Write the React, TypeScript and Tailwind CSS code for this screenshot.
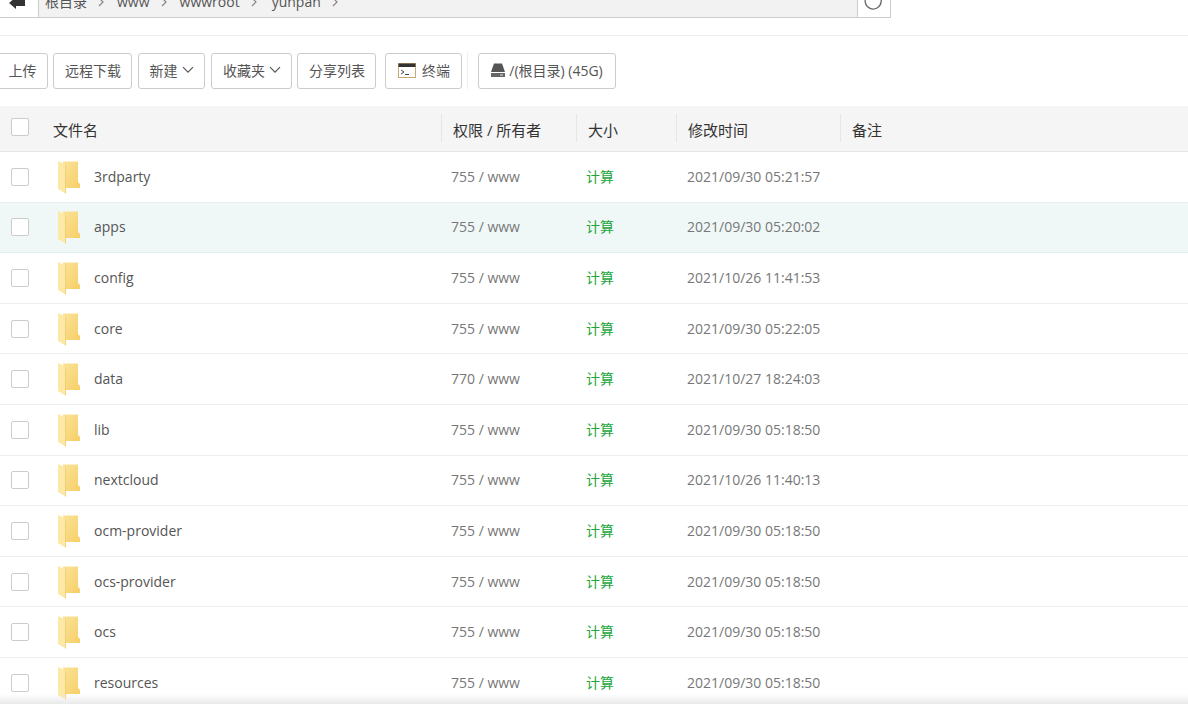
import React from "react";

const rows = [
  ["3rdparty", "755 / www", "2021/09/30 05:21:57"],
  ["apps", "755 / www", "2021/09/30 05:20:02"],
  ["config", "755 / www", "2021/10/26 11:41:53"],
  ["core", "755 / www", "2021/09/30 05:22:05"],
  ["data", "770 / www", "2021/10/27 18:24:03"],
  ["lib", "755 / www", "2021/09/30 05:18:50"],
  ["nextcloud", "755 / www", "2021/10/26 11:40:13"],
  ["ocm-provider", "755 / www", "2021/09/30 05:18:50"],
  ["ocs-provider", "755 / www", "2021/09/30 05:18:50"],
  ["ocs", "755 / www", "2021/09/30 05:18:50"],
  ["resources", "755 / www", "2021/09/30 05:18:50"],
];

const font = { fontFamily: '"Open Sans","Noto Sans CJK SC",sans-serif' };

function Folder() {
  return (
    <svg width="24" height="34" viewBox="0 0 24 34" className="shrink-0">
      <defs>
        <linearGradient id="fb" x1="0" y1="0" x2="1" y2="1">
          <stop offset="0" stopColor="#fbe39a" />
          <stop offset="1" stopColor="#f6cf66" />
        </linearGradient>
      </defs>
      <path d="M6 1.500H21V22L23 24V28H6Z" fill="url(#fb)" />
      <path d="M1 1L8.500 4.500V33.500L1 29Z" fill="#fde9a6" />
      <path d="M8.500 4.500V33.500" stroke="#edca72" strokeWidth="0.8" />
    </svg>
  );
}

function Chevron() {
  return (
    <svg width="12" height="8" viewBox="0 0 12 8" className="ml-1" fill="none" stroke="#555" strokeWidth="1.2">
      <path d="M1 1.200L6 6.200L11 1.200" />
    </svg>
  );
}

function Btn({ children, className = "" }: { children: React.ReactNode; className?: string }) {
  return (
    <div className={"h-9 flex items-center justify-center border border-[#ccc] rounded-[3px] text-[14px] text-[#555] bg-white shrink-0 pb-[2px] " + className}>
      {children}
    </div>
  );
}

function Check() {
  return <div className="w-[18px] h-[18px] border border-[#ccc] rounded-[2px] bg-white shrink-0" />;
}

function Crumb({ children, after }: { children: React.ReactNode; after: string }) {
  return (
    <div className={"flex items-center " + after}>
      <span>{children}</span>
      <svg width="8" height="10" viewBox="0 0 8 10" fill="none" stroke="#888" strokeWidth="1.2" className="ml-[10px]">
        <path d="M2 1L6 5L2 9" />
      </svg>
    </div>
  );
}

export default function App() {
  return (
    <div className="relative w-[1188px] h-[704px] overflow-hidden bg-white" style={font}>
      {/* path bar */}
      <div className="flex h-[18px] w-[891px] items-end">
        <div className="w-[39px] h-[18px] relative overflow-hidden border-r border-[#ccc] border-b shrink-0">
          <svg width="18" height="14" viewBox="0 0 18 14" className="absolute left-[8px] -top-[3px]" fill="#333">
            <path d="M1 6L8 0V3H17V9H8V12Z" />
          </svg>
        </div>
        <div className="flex-1 h-[18px] bg-[#f2f2f2] border-b border-[#ccc] overflow-hidden flex items-center pl-[6px] text-[14px] leading-none text-[#555]">
          <div className="flex -mt-[14px]">
            <Crumb after="mr-[12px]">根目录</Crumb>
            <Crumb after="mr-[12px]">www</Crumb>
            <Crumb after="mr-[14px]">wwwroot</Crumb>
            <Crumb after="">yunpan</Crumb>
          </div>
        </div>
        <div className="w-[34px] h-[18px] border-x border-b border-[#ccc] relative overflow-hidden shrink-0">
          <svg width="18" height="18" viewBox="0 0 18 18" className="absolute left-[6px] -top-[8px]" fill="none" stroke="#666" strokeWidth="1.3">
            <path d="M9 1A8 8 0 1 0 15 3.500" />
          </svg>
        </div>
      </div>

      {/* divider */}
      <div className="mt-[17px] h-px bg-[#eee]" />

      {/* toolbar */}
      <div className="mt-[17px] flex h-9 items-center -ml-1">
        <Btn className="w-[52px] pl-px">上传</Btn>
        <Btn className="w-[79px] ml-[5px] pl-px">远程下载</Btn>
        <Btn className="w-[67px] ml-[6px]">新建<Chevron /></Btn>
        <Btn className="w-[81px] ml-[6px] pl-px">收藏夹<Chevron /></Btn>
        <Btn className="w-[79px] ml-[5px] pl-px">分享列表</Btn>
        <Btn className="w-[77px] ml-[9px] pl-px">
          <svg width="18" height="15" viewBox="0 0 18 15" className="mr-[6px]">
            <rect x="0.500" y="0.500" width="17" height="14" fill="#fff" stroke="#caa873" />
            <rect x="0.500" y="0.500" width="17" height="3.500" fill="#333" />
            <path d="M3 7L6 9L3 11" fill="none" stroke="#444" />
            <path d="M7 11.500H11" stroke="#444" />
          </svg>
          终端
        </Btn>
        <div className="w-px h-9 bg-[#eee] ml-[5px]" />
        <Btn className="w-[138px] ml-[10px]">
          <svg width="14" height="14" viewBox="0 0 14 14" className="mr-[4px]">
            <path d="M3 0.500H11L14 9H0Z" fill="#555" />
            <rect x="0" y="10" width="14" height="4" fill="#666" />
            <rect x="9" y="11.500" width="3" height="1" fill="#ddd" />
          </svg>
          /(根目录) (45G)
        </Btn>
      </div>

      {/* header */}
      <div className="mt-[17px] h-[46px] bg-[#f5f5f5] border-b border-[#e6e6e6] flex items-center text-[15px] text-[#333]">
        <div className="w-[53px] pl-[11px] -mt-[3px]"><Check /></div>
        <div className="w-[388px] pt-[3px]">文件名</div>
        <HeadCell w="w-[135px]">权限 / 所有者</HeadCell>
        <HeadCell w="w-[100px]">大小</HeadCell>
        <HeadCell w="w-[164px]">修改时间</HeadCell>
        <HeadCell w="flex-1">备注</HeadCell>
      </div>

      {/* rows */}
      {rows.map((r, i) => (
        <div
          key={r[0]}
          className={"h-[50.6px] flex items-center border-b text-[14px] text-[#666] " + (i === 1 ? "bg-[#f0f8f7] border-[#dcefeb]" : "border-[#eee]")}
        >
          <div className="w-[57px] pl-[11px]"><Check /></div>
          <div className="w-[37px]"><Folder /></div>
          <div className="w-[357px] text-[#555] pb-[0.8px]">{r[0]}</div>
          <div className="w-[135px] text-[#777] pb-[0.8px]">{r[1]}</div>
          <div className="w-[101px] text-[#20a53a] pb-[0.8px]">计算</div>
          <div className="text-[#777] pb-[0.8px]">{r[2]}</div>
        </div>
      ))}

      {/* bottom shadow */}
      <div className="absolute left-0 right-0 bottom-0 h-[10px] bg-gradient-to-b from-transparent to-[#e9e9e9]" />
    </div>
  );
}

function HeadCell({ w, children }: { w: string; children: React.ReactNode }) {
  return (
    <div className={"h-[28px] flex items-center pl-[11px] border-l border-[#e6e6e6] -mt-px " + w}>
      <span className="pt-[5px]">{children}</span>
    </div>
  );
}
